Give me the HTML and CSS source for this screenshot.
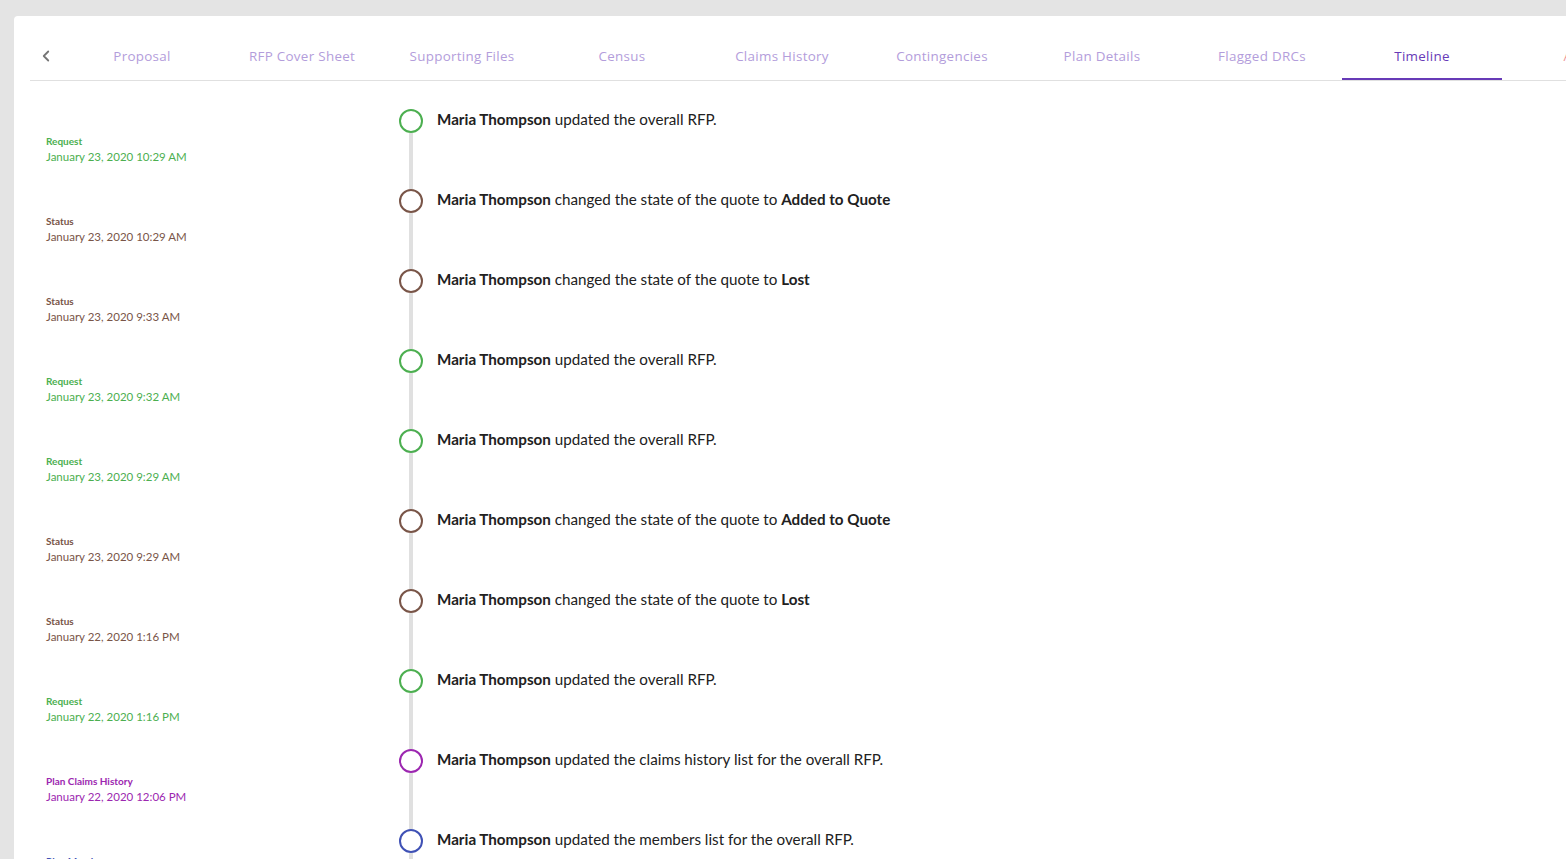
FILE: index.html
```html
<!DOCTYPE html>
<html lang="en">
  <head>
    <meta charset="UTF-8" />
    <title>Timeline</title>
    <link rel="stylesheet" href="styles.css">
  </head>
  <body>
    <div class="card">
      <nav class="tabs">
        <button class="tabs-prev" aria-label="Previous">
          <svg viewBox="0 0 24 24" width="18" height="18">
            <path d="M15 6l-6 6l6 6" fill="none" stroke="currentColor" stroke-width="2.4" stroke-linecap="round" stroke-linejoin="round"></path>
          </svg>
        </button>
        <a class="tab">Proposal</a>
        <a class="tab">RFP Cover Sheet</a>
        <a class="tab">Supporting Files</a>
        <a class="tab">Census</a>
        <a class="tab">Claims History</a>
        <a class="tab">Contingencies</a>
        <a class="tab">Plan Details</a>
        <a class="tab">Flagged DRCs</a>
        <a class="tab active">Timeline</a>
        <a class="tab extra">Activity</a>
      </nav>

      <ul class="timeline">
        <li class="entry request">
          <div class="meta"><b>Request</b><span>January 23, 2020 10:29 AM</span></div>
          <div class="marker"><i></i></div>
          <p><b>Maria Thompson</b> updated the overall RFP.</p>
        </li>
        <li class="entry status">
          <div class="meta"><b>Status</b><span>January 23, 2020 10:29 AM</span></div>
          <div class="marker"><i></i></div>
          <p><b>Maria Thompson</b> changed the state of the quote to <b>Added to Quote</b></p>
        </li>
        <li class="entry status">
          <div class="meta"><b>Status</b><span>January 23, 2020 9:33 AM</span></div>
          <div class="marker"><i></i></div>
          <p><b>Maria Thompson</b> changed the state of the quote to <b>Lost</b></p>
        </li>
        <li class="entry request">
          <div class="meta"><b>Request</b><span>January 23, 2020 9:32 AM</span></div>
          <div class="marker"><i></i></div>
          <p><b>Maria Thompson</b> updated the overall RFP.</p>
        </li>
        <li class="entry request">
          <div class="meta"><b>Request</b><span>January 23, 2020 9:29 AM</span></div>
          <div class="marker"><i></i></div>
          <p><b>Maria Thompson</b> updated the overall RFP.</p>
        </li>
        <li class="entry status">
          <div class="meta"><b>Status</b><span>January 23, 2020 9:29 AM</span></div>
          <div class="marker"><i></i></div>
          <p><b>Maria Thompson</b> changed the state of the quote to <b>Added to Quote</b></p>
        </li>
        <li class="entry status">
          <div class="meta"><b>Status</b><span>January 22, 2020 1:16 PM</span></div>
          <div class="marker"><i></i></div>
          <p><b>Maria Thompson</b> changed the state of the quote to <b>Lost</b></p>
        </li>
        <li class="entry request">
          <div class="meta"><b>Request</b><span>January 22, 2020 1:16 PM</span></div>
          <div class="marker"><i></i></div>
          <p><b>Maria Thompson</b> updated the overall RFP.</p>
        </li>
        <li class="entry claims">
          <div class="meta"><b>Plan Claims History</b><span>January 22, 2020 12:06 PM</span></div>
          <div class="marker"><i></i></div>
          <p><b>Maria Thompson</b> updated the claims history list for the overall RFP.</p>
        </li>
        <li class="entry members">
          <div class="meta"><b>Plan Members</b><span>January 22, 2020 12:02 PM</span></div>
          <div class="marker"><i></i></div>
          <p><b>Maria Thompson</b> updated the members list for the overall RFP.</p>
        </li>
      </ul>
    </div>
  </body>
</html>
```

FILE: styles.css
```css
:root {
  --tab-color: #b39ddb;
  --tab-active: #673ab7;
  --border-color: #e0e0e0;
  --text-color: #212121;

  --green: #4caf50;
  --brown: #795548;
  --purple: #9c27b0;
  --indigo: #3f51b5;
}

html, body {
  margin: 0;
  height: 100%;
  overflow: hidden;
}

body {
  padding: 16px 0 0 14px;
  box-sizing: border-box;
  background: #e4e4e4;
  color: var(--text-color);
  font-family: 'Source Sans Pro', Lato, 'Noto Sans', sans-serif;
  -webkit-font-smoothing: antialiased;
}

.card {
  min-height: 100%;
  padding: 16px 0 0 16px;
  box-sizing: border-box;
  border-radius: 4px 0 0 0;
  background: #fff;
}

/* tabs */
.tabs {
  display: flex;
  height: 48px;
  border-bottom: 1px solid var(--border-color);
  overflow: hidden;
}

.tabs-prev {
  display: flex;
  align-items: center;
  justify-content: center;
  flex: 0 0 32px;
  padding: 0;
  border: 0;
  background: none;
  color: #757575;
  cursor: pointer;
}

.tab {
  display: flex;
  align-items: center;
  justify-content: center;
  flex: 0 0 160px;
  padding-top: 2px;
  box-sizing: border-box;
  border-bottom: 2px solid transparent;
  color: var(--tab-color);
  font-family: 'Open Sans', sans-serif;
  font-size: 13.4px;
  letter-spacing: .3px;
  cursor: pointer;
}

.tab.active {
  border-bottom-color: var(--tab-active);
  color: var(--tab-active);
}

.tab.extra {
  padding-left: 10px;
  color: #ef9a9a;
}

/* timeline */
.timeline {
  margin: 0;
  padding: 28px 0 0 16px;
  list-style: none;
}

.entry {
  display: flex;
  height: 80px;
}

.meta {
  display: flex;
  flex-direction: column;
  width: 353px;
  padding-top: 25px;
  box-sizing: border-box;
}

.meta b {
  font-size: 10px;
  line-height: 14px;
  font-weight: 700;
}

.meta span {
  margin-top: 1px;
  font-size: 11.5px;
  line-height: 16px;
}

.marker {
  display: flex;
  flex-direction: column;
  align-items: center;
  width: 24px;
}

.marker i {
  width: 20px;
  height: 20px;
  border: 2px solid currentColor;
  border-radius: 50%;
}

.marker::after {
  content: '';
  flex: 1;
  width: 4px;
  background: var(--border-color);
}

.entry p {
  margin: 0 0 0 14px;
  font-size: 15.2px;
  line-height: 20px;
}

.entry p b {
  font-weight: 700;
}

.request .meta, .request .marker { color: var(--green); }
.status .meta, .status .marker { color: var(--brown); }
.claims .meta, .claims .marker { color: var(--purple); }
.members .meta, .members .marker { color: var(--indigo); }
```
